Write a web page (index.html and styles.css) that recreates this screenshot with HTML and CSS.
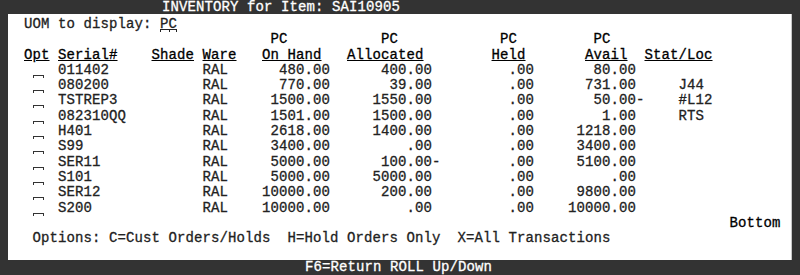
FILE: index.html
```html
<!DOCTYPE html>
<html lang="en">
<head>
    <meta charset="UTF-8">
    <title>INVENTORY for Item: SAI10905</title>
    <link rel="stylesheet" href="styles.css">
</head>
<body>

    <div class="title-bar">INVENTORY for Item: SAI10905</div>

    <div class="panel">
        <div class="line">UOM to display: <span class="field">PC</span></div>

        <div class="grid">
            <!-- unit row -->
            <span></span><span></span><span></span><span></span>
            <span class="head"> PC</span>
            <span class="head">      PC</span>
            <span class="head">       PC</span>
            <span class="head">       PC</span>
            <span></span>

            <!-- column titles -->
            <span class="head"><u>Opt</u></span>
            <span class="head"><u>Serial#</u></span>
            <span class="head"><u>Shade</u></span>
            <span class="head"><u>Ware</u></span>
            <span class="head"><u>On Hand</u></span>
            <span class="head">  <u>Allocated</u></span>
            <span class="head">      <u>Held</u></span>
            <span class="head">      <u>Avail</u></span>
            <span class="head"><u>Stat/Loc</u></span>

            <span class="opt"><i class="fld"></i></span><span>011402</span><span></span><span>RAL</span><span class="num">480.00</span><span class="num">400.00 </span><span class="num">.00</span><span class="num">80.00 </span><span class="loc"></span>
            <span class="opt"><i class="fld"></i></span><span>080200</span><span></span><span>RAL</span><span class="num">770.00</span><span class="num">39.00 </span><span class="num">.00</span><span class="num">731.00 </span><span class="loc">J44</span>
            <span class="opt"><i class="fld"></i></span><span>TSTREP3</span><span></span><span>RAL</span><span class="num">1500.00</span><span class="num">1550.00 </span><span class="num">.00</span><span class="num">50.00-</span><span class="loc">#L12</span>
            <span class="opt"><i class="fld"></i></span><span>082310QQ</span><span></span><span>RAL</span><span class="num">1501.00</span><span class="num">1500.00 </span><span class="num">.00</span><span class="num">1.00 </span><span class="loc">RTS</span>
            <span class="opt"><i class="fld"></i></span><span>H401</span><span></span><span>RAL</span><span class="num">2618.00</span><span class="num">1400.00 </span><span class="num">.00</span><span class="num">1218.00 </span><span class="loc"></span>
            <span class="opt"><i class="fld"></i></span><span>S99</span><span></span><span>RAL</span><span class="num">3400.00</span><span class="num">.00 </span><span class="num">.00</span><span class="num">3400.00 </span><span class="loc"></span>
            <span class="opt"><i class="fld"></i></span><span>SER11</span><span></span><span>RAL</span><span class="num">5000.00</span><span class="num">100.00-</span><span class="num">.00</span><span class="num">5100.00 </span><span class="loc"></span>
            <span class="opt"><i class="fld"></i></span><span>S101</span><span></span><span>RAL</span><span class="num">5000.00</span><span class="num">5000.00 </span><span class="num">.00</span><span class="num">.00 </span><span class="loc"></span>
            <span class="opt"><i class="fld"></i></span><span>SER12</span><span></span><span>RAL</span><span class="num">10000.00</span><span class="num">200.00 </span><span class="num">.00</span><span class="num">9800.00 </span><span class="loc"></span>
            <span class="opt"><i class="fld"></i></span><span>S200</span><span></span><span>RAL</span><span class="num">10000.00</span><span class="num">.00 </span><span class="num">.00</span><span class="num">10000.00 </span><span class="loc"></span>
        </div>

        <div class="line bottom">Bottom</div>
        <div class="line"> Options: C=Cust Orders/Holds  H=Hold Orders Only  X=All Transactions</div>
    </div>

    <div class="key-bar">F6=Return ROLL Up/Down</div>

</body>
</html>
```

FILE: styles.css
```css
:root {
    --cw: 8.5px;   /* one terminal column */
    --lh: 15.3px;  /* one terminal row */
}

body {
    margin: 0;
    background-color: #333333;
    font-family: "Liberation Mono", monospace;
    font-size: 14px;
    letter-spacing: 0.1px;
    line-height: var(--lh);
    -webkit-text-stroke: 0.3px currentColor; /* closer to the emulator's bitmap font */
}

.title-bar {
    height: 14px;
    line-height: 14px;
    padding-left: 162px;
    color: #ffffff;
    white-space: pre;
}

.panel {
    height: 246px;
    margin: 0 8px;
    padding: 3px 0 0 16px;
    box-sizing: border-box;
    background-color: #ffffff;
    border-right: 1px solid #c8c8c8;
    color: #222222;
}

.line {
    height: var(--lh);
    white-space: pre;
}

.field {
    background:
        linear-gradient(#222, #222) 0 calc(100% - 2px) / 100% 1px no-repeat,
        repeating-linear-gradient(90deg, #222 0 1px, transparent 1px var(--cw)) 0 100% / 100% 2px no-repeat,
        linear-gradient(#222, #222) 100% 100% / 1px 2px no-repeat;
}

.grid {
    display: grid;
    grid-template-columns:
        calc(var(--cw) * 4)
        calc(var(--cw) * 11)
        calc(var(--cw) * 6)
        calc(var(--cw) * 7)
        calc(var(--cw) * 8)
        calc(var(--cw) * 13)
        calc(var(--cw) * 11)
        calc(var(--cw) * 13)
        1fr;
    grid-auto-rows: var(--lh);
    white-space: pre;
}

.head {
    color: #000000;
}

.num {
    text-align: right;
}

.opt {
    padding-left: var(--cw);
}

.fld {
    display: inline-block;
    width: 9px;
    height: 2px;
    border: 1px solid #333;
    border-bottom: none;
    vertical-align: -4px;
}

.loc {
    padding-left: calc(var(--cw) * 4);
}

.bottom {
    width: calc(var(--cw) * 89);
    text-align: right;
    color: #000000;
}

.key-bar {
    height: 15px;
    line-height: 15px;
    padding-left: 305px;
    color: #ffffff;
    white-space: pre;
}
```
